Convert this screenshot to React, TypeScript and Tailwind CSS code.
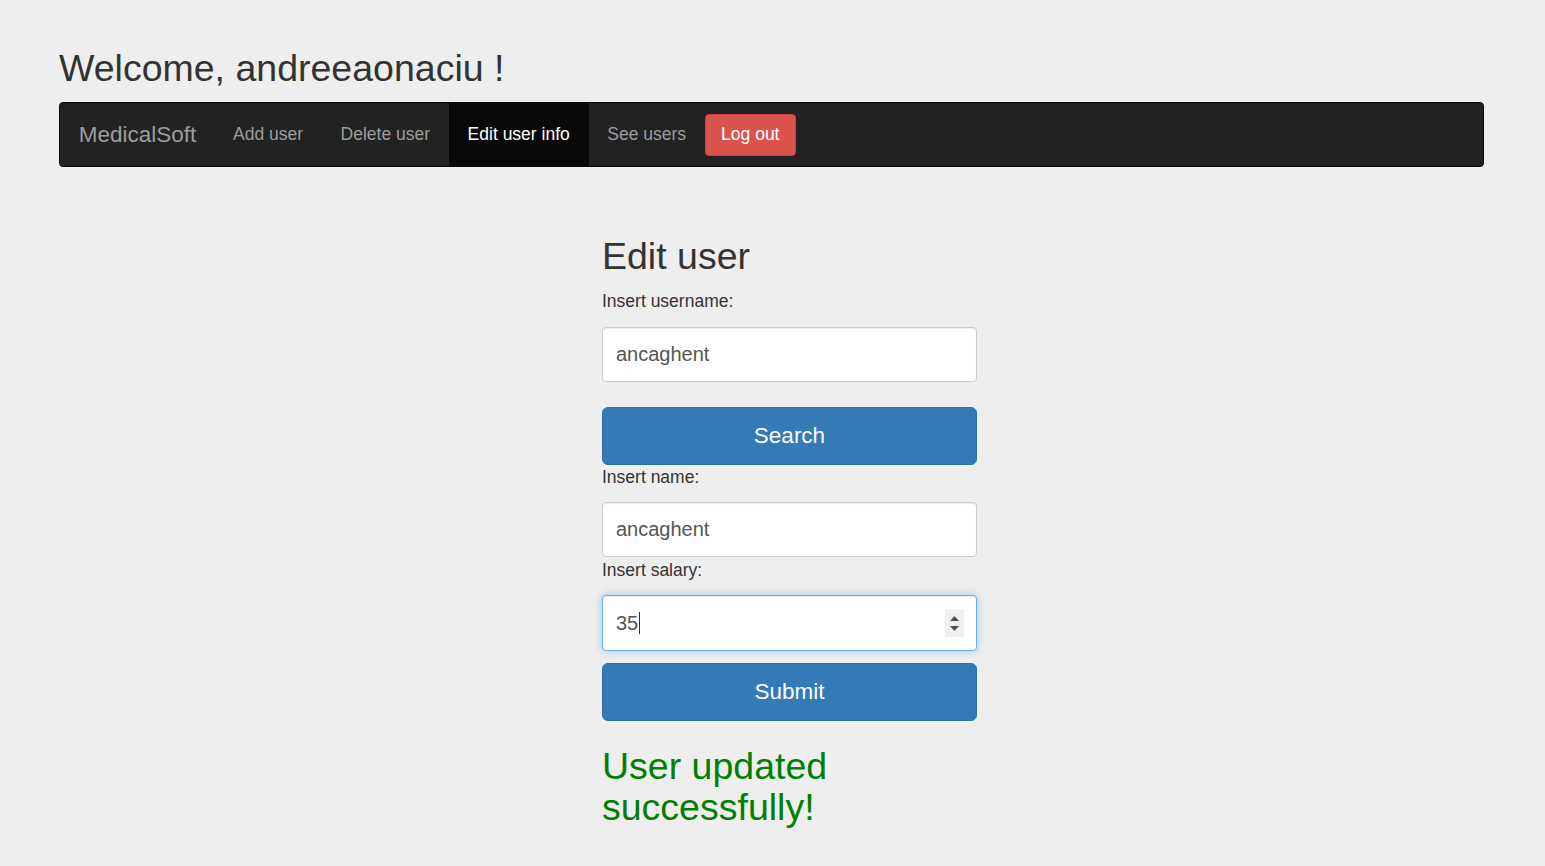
import React from 'react';

const navLinks = ['Add user', 'Delete user', 'Edit user info', 'See users'];

function TextField({ value }: { value: string }) {
  return (
    <input
      type="text"
      readOnly
      value={value}
      className="block h-[55px] w-full rounded-[4px] border border-[#cccccc] bg-white px-[13px] text-[20px] text-[#555555] shadow-[inset_0_1px_1px_rgba(0,0,0,0.075)] outline-none"
    />
  );
}

function Label({ children }: { children: React.ReactNode }) {
  return <label className="block text-[17.5px] leading-[25px] text-[#333333]">{children}</label>;
}

function BlueButton({ children }: { children: React.ReactNode }) {
  return (
    <button
      type="button"
      className="block h-[58px] w-full rounded-[6px] border border-[#2e6da4] bg-[#337ab7] text-[22.5px] text-white"
    >
      {children}
    </button>
  );
}

export default function App() {
  const active = 'Edit user info';

  return (
    <div className="min-h-[866px] bg-[#eeeeee] px-[59px] pt-[48px] font-['Liberation_Sans',Arial,sans-serif] text-[#333333]">
      <h1 className="mb-[13px] text-[37.5px] leading-[41px]">Welcome, andreeaonaciu !</h1>

      <nav className="flex h-[65px] w-[1425px] items-stretch rounded-[4px] border border-[#080808] bg-[#222222]">
        <span className="flex items-center pl-[18.75px] pr-[18px] text-[22.5px] text-[#9d9d9d]">MedicalSoft</span>
        {navLinks.map((link) => (
          <a
            key={link}
            className={
              link === active
                ? 'flex items-center bg-[#080808] px-[18.75px] text-[17.5px] text-white'
                : 'flex items-center px-[18.75px] text-[17.5px] text-[#9d9d9d]'
            }
          >
            {link}
          </a>
        ))}
        <div className="flex items-center">
          <button
            type="button"
            className="h-[42px] w-[91px] rounded-[4px] border border-[#d43f3a] bg-[#d9534f] text-[17.5px] text-white"
          >
            Log out
          </button>
        </div>
      </nav>

      <div className="ml-[543px] w-[375px] pt-[69px]">
        <h2 className="mb-[12px] text-[37.5px] leading-[41px]">Edit user</h2>

        <Label>Insert username:</Label>
        <div className="mt-[13px]">
          <TextField value="ancaghent" />
        </div>

        <div className="mt-[25px]">
          <BlueButton>Search</BlueButton>
        </div>

        <Label>Insert name:</Label>
        <div className="mt-[12px]">
          <TextField value="ancaghent" />
        </div>

        <div className="mt-[1px]">
          <Label>Insert salary:</Label>
        </div>
        <div className="mt-[12px] flex h-[56px] w-full items-center rounded-[4px] border border-[#66afe9] bg-white pl-[13px] pr-[12px] text-[20px] text-[#555555] shadow-[inset_0_1px_1px_rgba(0,0,0,0.075),0_0_8px_rgba(102,175,233,0.6)]">
          <span>35</span>
          <span className="ml-[1px] h-[22px] w-px bg-[#333333]" />
          <span className="flex-1" />
          <span className="flex h-[28px] w-[19px] flex-col items-center justify-center gap-[5px] bg-[#f0f0f0]">
            <svg width="9" height="5" viewBox="0 0 9 5">
              <path d="M4.5 0 L9 5 L0 5 Z" fill="#505050" />
            </svg>
            <svg width="9" height="5" viewBox="0 0 9 5">
              <path d="M0 0 L9 0 L4.5 5 Z" fill="#505050" />
            </svg>
          </span>
        </div>

        <div className="mt-[12px]">
          <BlueButton>Submit</BlueButton>
        </div>

        <p className="mt-[25px] text-[37.5px] leading-[41px] text-[#008000]">User updated successfully!</p>
      </div>
    </div>
  );
}
